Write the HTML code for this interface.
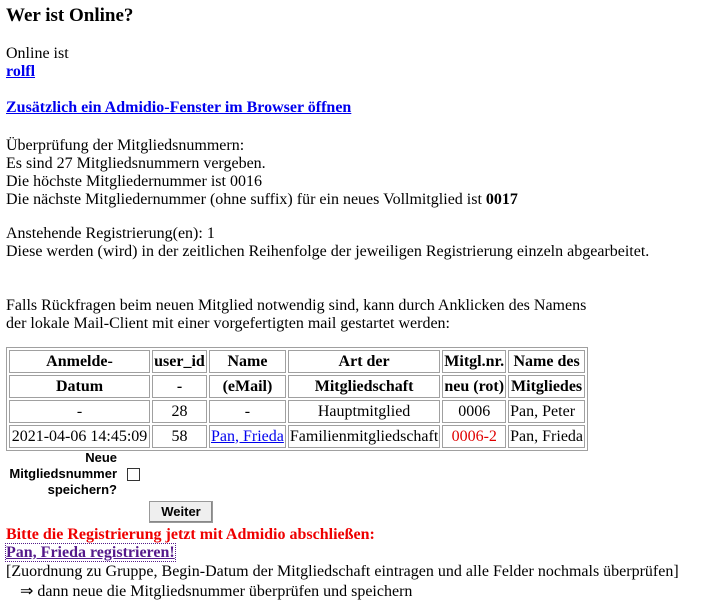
<!DOCTYPE html>
<html><head><meta charset="utf-8"><style>
body{margin:0;width:704px;height:586px;overflow:hidden;background:#fff;font-family:"Liberation Serif",serif;font-size:16px;color:#000;position:relative}
.a{position:absolute;left:6px;white-space:nowrap;line-height:18px}
a{color:#0000ee;text-decoration:underline}
b{font-weight:bold}
table{position:absolute;left:6px;top:347px;border:1px solid #a0a0a0;border-spacing:2px;border-collapse:separate}
td{border:1px solid #a0a0a0;height:21px;padding:0 1px;text-align:center;font-size:16px;line-height:18px;white-space:nowrap}
th{border:1px solid #a0a0a0;height:21px;padding:0 1px;font-weight:bold;font-size:16px;white-space:nowrap}
.lab{position:absolute;left:6px;top:450px;width:111px;text-align:right;font-family:"Liberation Sans",sans-serif;font-weight:bold;font-size:13px;line-height:16px}
.cb{position:absolute;left:127px;top:468px;width:11px;height:11px;border:1px solid #333;background:#fff}
.btn{position:absolute;left:149px;top:501px;width:62px;height:20px;border:1px solid #999;background:#efefef;box-shadow:inset -1px -1px #888;font-family:"Liberation Sans",sans-serif;font-weight:bold;font-size:13px;text-align:center;line-height:20px}
</style></head><body>
<div class="a" style="top:5px;font-size:19px;font-weight:bold;line-height:22px">Wer ist Online?</div>
<div class="a" style="top:45px">Online ist</div>
<div class="a" style="top:63px"><a href="#"><b>rolfl</b></a></div>
<div class="a" style="top:99px"><a href="#"><b>Zusätzlich ein Admidio-Fenster im Browser öffnen</b></a></div>
<div class="a" style="top:137px">Überprüfung der Mitgliedsnummern:</div>
<div class="a" style="top:155px">Es sind 27 Mitgliedsnummern vergeben.</div>
<div class="a" style="top:173px">Die höchste Mitgliedernummer ist 0016</div>
<div class="a" style="top:191px">Die nächste Mitgliedernummer (ohne suffix) für ein neues Vollmitglied ist <b>0017</b></div>
<div class="a" style="top:225px">Anstehende Registrierung(en): 1</div>
<div class="a" style="top:243px">Diese werden (wird) in der zeitlichen Reihenfolge der jeweiligen Registrierung einzeln abgearbeitet.</div>
<div class="a" style="top:297px">Falls Rückfragen beim neuen Mitglied notwendig sind, kann durch Anklicken des Namens</div>
<div class="a" style="top:315px">der lokale Mail-Client mit einer vorgefertigten mail gestartet werden:</div>
<table>
<tr><th style="width:137px">Anmelde-</th><th style="width:51px">user_id</th><th style="width:72px">Name</th><th style="width:146px">Art der</th><th style="width:58px">Mitgl.nr.</th><th style="width:70px">Name des</th></tr>
<tr><th>Datum</th><th>-</th><th>(eMail)</th><th>Mitgliedschaft</th><th>neu (rot)</th><th>Mitgliedes</th></tr>
<tr><td>-</td><td>28</td><td>-</td><td>Hauptmitglied</td><td>0006</td><td style="text-align:left">Pan, Peter</td></tr>
<tr><td>2021-04-06 14:45:09</td><td>58</td><td><a href="#">Pan, Frieda</a></td><td>Familienmitgliedschaft</td><td style="color:#e00000">0006-2</td><td style="text-align:left">Pan, Frieda</td></tr>
</table>
<div class="lab">Neue<br>Mitgliedsnummer<br>speichern?</div>
<div class="cb"></div>
<div class="btn">Weiter</div>
<div class="a" style="top:526px;color:#ee0000;font-weight:bold">Bitte die Registrierung jetzt mit Admidio abschließen:</div>
<div class="a" style="top:544px"><a href="#" style="color:#551a8b;outline:1px dotted #551a8b"><b>Pan, Frieda registrieren!</b></a></div>
<div class="a" style="top:563px">[Zuordnung zu Gruppe, Begin-Datum der Mitgliedschaft eintragen und alle Felder nochmals überprüfen]</div>
<div class="a" style="top:583px;left:20px">⇒ dann neue die Mitgliedsnummer überprüfen und speichern</div>
</body></html>
